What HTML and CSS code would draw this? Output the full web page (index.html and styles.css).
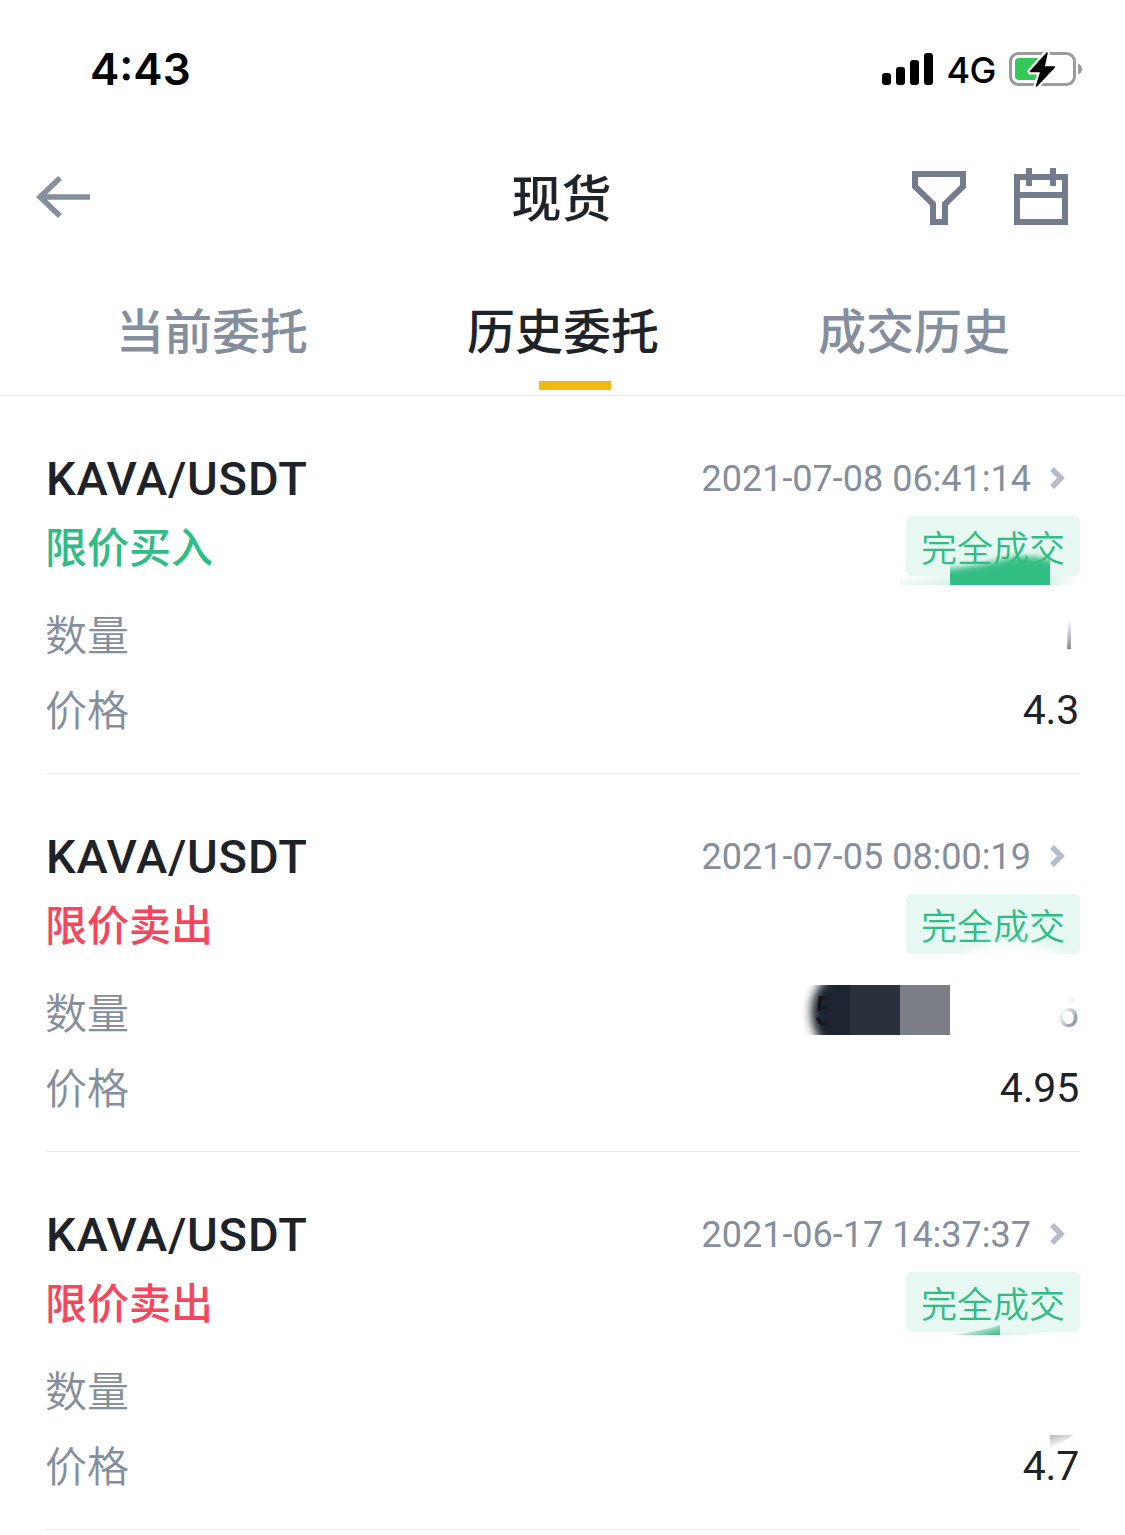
FILE: index.html
```html
<!DOCTYPE html>
<html lang="zh-CN">
<head>
<meta charset="utf-8">
<title>现货</title>
<link rel="stylesheet" href="styles.css">
</head>
<body>

<div class="status-bar">
    <div class="time">4:43</div>
    <div class="status-icons">
        <svg class="signal" width="52" height="32" viewBox="0 0 52 32">
            <rect x="1" y="20" width="9" height="12" rx="3"/>
            <rect x="15" y="14" width="9" height="18" rx="3"/>
            <rect x="29" y="7" width="9" height="25" rx="3"/>
            <rect x="43" y="0" width="9" height="32" rx="3"/>
        </svg>
        <span class="network">4G</span>
        <svg class="battery" width="74" height="38" viewBox="0 0 74 38">
            <rect x="1.500" y="3.500" width="64" height="31" rx="8" fill="none" stroke="#9b9b9e" stroke-width="3"/>
            <path d="M69 13.500q4 1.500 4 5.500t-4 5.500z" fill="#9b9b9e"/>
            <rect x="6" y="8" width="26" height="22" rx="4" fill="#34c759"/>
            <path d="M38 3L21.500 21.500H32L27.500 36L45.500 17H35z" fill="#000" stroke="#fff" stroke-width="6" stroke-linejoin="round" paint-order="stroke"/>
            <path d="M38 3L21.500 21.500H32L27.500 36L45.500 17H35z" fill="#000" stroke="#000" stroke-width="1.500" stroke-linejoin="round"/>
        </svg>
    </div>
</div>

<div class="nav">
    <svg class="back" width="54" height="42" viewBox="0 0 54 42">
        <path d="M54 21H5M24 2L4 21L24 40" fill="none" stroke="#848e9f" stroke-width="5.500"/>
    </svg>
    <h1>现货</h1>
    <div class="actions">
        <svg width="54" height="58" viewBox="0 0 54 58">
            <path d="M3 6H51V18.500L33 36V54H21V36L3 18.500z" fill="none" stroke="#737b8c" stroke-width="6"/>
        </svg>
        <svg width="54" height="58" viewBox="0 0 54 58">
            <path d="M3 9H51V54H3zM3 27H51M15 0V18M39 0V18" fill="none" stroke="#737b8c" stroke-width="6"/>
        </svg>
    </div>
</div>

<div class="tabs">
    <div class="tab">当前委托</div>
    <div class="tab active">历史委托</div>
    <div class="tab">成交历史</div>
</div>

<div class="orders">
    <div class="order">
        <div class="row head">
            <span class="pair">KAVA/USDT</span>
            <span class="date">2021-07-08 06:41:14</span>
            <svg class="chevron" width="15" height="22" viewBox="0 0 15 22"><path d="M2 2L11 11L2 20" fill="none" stroke="#b7bdc8" stroke-width="5.500"/></svg>
        </div>
        <div class="row kind">
            <span class="side buy">限价买入</span>
            <span class="tag">完全成交</span>
        </div>
        <div class="row"><span class="label">数量</span></div>
        <div class="row"><span class="label">价格</span><span class="value">4.3</span></div>
        <svg class="smudge" width="1125" height="378" viewBox="0 0 1125 378">
            <defs>
                <filter id="soft"><feGaussianBlur stdDeviation="3"/></filter>
                <clipPath id="c1"><rect x="950" y="150" width="100" height="39"/></clipPath>
                <linearGradient id="g1" x1="0" y1="0" x2="1" y2="1"><stop offset="0" stop-color="#fff"/><stop offset="1" stop-color="#d5f1e5"/></linearGradient>
                <linearGradient id="g2" x1="0" y1="0" x2="1" y2="0"><stop offset="0" stop-color="#d9f2e8"/><stop offset="1" stop-color="#fff"/></linearGradient>
                <linearGradient id="g3" x1="0" y1="0" x2="0" y2="1"><stop offset="0" stop-color="#fff"/><stop offset="1" stop-color="#868a92"/></linearGradient>
            </defs>
            <rect x="900" y="180" width="50" height="9" fill="url(#g1)"/>
            <rect x="1050" y="180" width="28" height="9" fill="url(#g2)"/>
            <g clip-path="url(#c1)">
                <path d="M935 174Q975 171 1005 163Q1030 156 1065 168V210H935z" fill="#31be83" filter="url(#soft)"/>
            </g>
            <path d="M1068 224H1071V253H1067z" fill="url(#g3)"/>
        </svg>
    </div>

    <div class="order">
        <div class="row head">
            <span class="pair">KAVA/USDT</span>
            <span class="date">2021-07-05 08:00:19</span>
            <svg class="chevron" width="15" height="22" viewBox="0 0 15 22"><path d="M2 2L11 11L2 20" fill="none" stroke="#b7bdc8" stroke-width="5.500"/></svg>
        </div>
        <div class="row kind">
            <span class="side sell">限价卖出</span>
            <span class="tag">完全成交</span>
        </div>
        <div class="row"><span class="label">数量</span><span class="value faded">6</span></div>
        <div class="row"><span class="label">价格</span><span class="value">4.95</span></div>
        <svg class="smudge" width="1125" height="378" viewBox="0 0 1125 378">
            <defs>
                <filter id="soft2" x="-30%" y="-30%" width="160%" height="160%"><feGaussianBlur stdDeviation="5"/></filter>
                <clipPath id="c2"><rect x="795" y="211" width="55" height="50"/></clipPath>
                <clipPath id="c3"><rect x="930" y="155" width="150" height="27"/></clipPath>
                <linearGradient id="g4" x1="0" y1="0" x2="1" y2="1"><stop offset="0.400" stop-color="#fff"/><stop offset="0.800" stop-color="#fff" stop-opacity="0.100"/></linearGradient>
                <linearGradient id="g7" x1="0" y1="0" x2="1" y2="0"><stop offset="0" stop-color="#1f2530" stop-opacity="0"/><stop offset="1" stop-color="#1f2530"/></linearGradient>
            </defs>
            <g clip-path="url(#c3)">
                <ellipse cx="1012" cy="188" rx="50" ry="18" fill="#fff" filter="url(#soft2)"/>
            </g>
            <g clip-path="url(#c2)">
                <path d="M870 190H845Q811 210 811 237Q811 262 832 280H870z" fill="#1f2530" filter="url(#soft2)"/>
                <text class="ghost" x="813" y="252">5</text>
                <rect x="820" y="221" width="10" height="38" fill="url(#g7)"/>
                <rect x="830" y="221" width="20" height="38" fill="#1f2530"/>
            </g>
            <rect x="850" y="211" width="50" height="50" fill="#2b313c"/>
            <rect x="900" y="211" width="50" height="50" fill="#7c7e87"/>
            <rect x="1053" y="218" width="27" height="38" fill="url(#g4)"/>
        </svg>
    </div>

    <div class="order">
        <div class="row head">
            <span class="pair">KAVA/USDT</span>
            <span class="date">2021-06-17 14:37:37</span>
            <svg class="chevron" width="15" height="22" viewBox="0 0 15 22"><path d="M2 2L11 11L2 20" fill="none" stroke="#b7bdc8" stroke-width="5.500"/></svg>
        </div>
        <div class="row kind">
            <span class="side sell">限价卖出</span>
            <span class="tag">完全成交</span>
        </div>
        <div class="row"><span class="label">数量</span></div>
        <div class="row"><span class="label">价格</span><span class="value">4.7</span></div>
        <svg class="smudge" width="1125" height="378" viewBox="0 0 1125 378">
            <defs>
                <linearGradient id="g5" gradientUnits="userSpaceOnUse" x1="972" y1="173" x2="976" y2="188"><stop offset="0.100" stop-color="#3fbd8a" stop-opacity="0"/><stop offset="1" stop-color="#3fbd8a"/></linearGradient>
                <linearGradient id="g6" x1="0" y1="0" x2="0.500" y2="1"><stop offset="0" stop-color="#b4b5b8"/><stop offset="0.800" stop-color="#fff"/></linearGradient>
            </defs>
            <path d="M948 183Q980 180 1000 173V183z" fill="url(#g5)"/>
            <rect x="1000" y="180" width="60" height="3" fill="url(#g2)"/>
            <path d="M1050 283H1074L1050 297z" fill="url(#g6)"/>
        </svg>
    </div>
</div>

</body>
</html>
```

FILE: styles.css
```css
* {
    box-sizing: border-box;
}

body {
    margin: 0;
    height: 1535px;
    overflow: hidden;
    background-color: #fff;
    color: #1e2329;
    font-family: Roboto, "Noto Sans CJK SC", sans-serif;
}

svg {
    display: block;
    flex: none;
}

.status-bar {
    display: flex;
    justify-content: space-between;
    align-items: center;
    height: 138px;
    padding: 0 42px 0 90px;
    color: #000;
    font-family: Inter, sans-serif;
}

.time {
    font-size: 44px;
    font-weight: 600;
}

.status-icons {
    display: flex;
    align-items: center;
}

.network {
    margin: 2px 13px 0 13px;
    font-size: 36px;
    font-weight: 450;
    letter-spacing: -0.5px;
}

.nav {
    display: grid;
    grid-template-columns: 200px 1fr 200px;
    align-items: center;
    height: 118px;
    padding: 0 57px 0 36px;
}

.nav h1 {
    margin: 6px 0 0 19px;
    text-align: center;
    font-size: 50px;
    font-weight: 500;
    line-height: 60px;
}

.actions {
    display: flex;
    justify-content: flex-end;
    gap: 48px;
}

.tabs {
    display: flex;
    gap: 159px;
    height: 140px;
    padding: 41px 0 0 116px;
    border-bottom: 1px solid #e9ebee;
}

.tab {
    position: relative;
    color: #848e9c;
    font-size: 48px;
    font-weight: 500;
    line-height: 72px;
}

.tab.active {
    color: #1e2329;
}

.tab.active::after {
    content: "";
    position: absolute;
    left: 72px;
    top: 84px;
    width: 72px;
    height: 9px;
    background-color: #f0b90b;
}

.order {
    position: relative;
    height: 378px;
    padding: 48px 45px 0;
}

.order::after {
    content: "";
    display: block;
    margin-top: 25px;
    border-bottom: 1px solid #eaecef;
}

.row {
    display: flex;
    align-items: center;
    justify-content: space-between;
    height: 75px;
    font-size: 42px;
    line-height: 60px;
}

.row.head {
    height: 72px;
    padding: 0 15px 2px 0;
}

.row.kind {
    height: 60px;
    margin-bottom: 22px;
}

.pair {
    flex: 1;
    padding-left: 1px;
    font-size: 47px;
    font-weight: 500;
    letter-spacing: 0.8px;
}

.date {
    margin-right: 19px;
    color: #848e9c;
    font-size: 36px;
}

.chevron {
    margin-bottom: 3px;
}

.side {
    padding-top: 6px;
    font-weight: 500;
}

.buy {
    color: #2ebd85;
}

.sell {
    color: #f6465d;
}

.tag {
    height: 60px;
    padding: 4px 15px 0;
    border-radius: 6px;
    background-color: #e7f7f1;
    color: #2ebd85;
    font-size: 36px;
    font-weight: 350;
}

.label {
    padding-top: 2px;
    color: #848e9c;
    font-weight: 350;
}

.value {
    padding: 0 1px 2px 0;
    font-size: 41px;
    letter-spacing: -0.2px;
}

.smudge {
    position: absolute;
    left: 0;
    top: 0;
}

.ghost {
    fill: #12161c;
    font-size: 42px;
}

.faded {
    color: #848e9c;
}
```
